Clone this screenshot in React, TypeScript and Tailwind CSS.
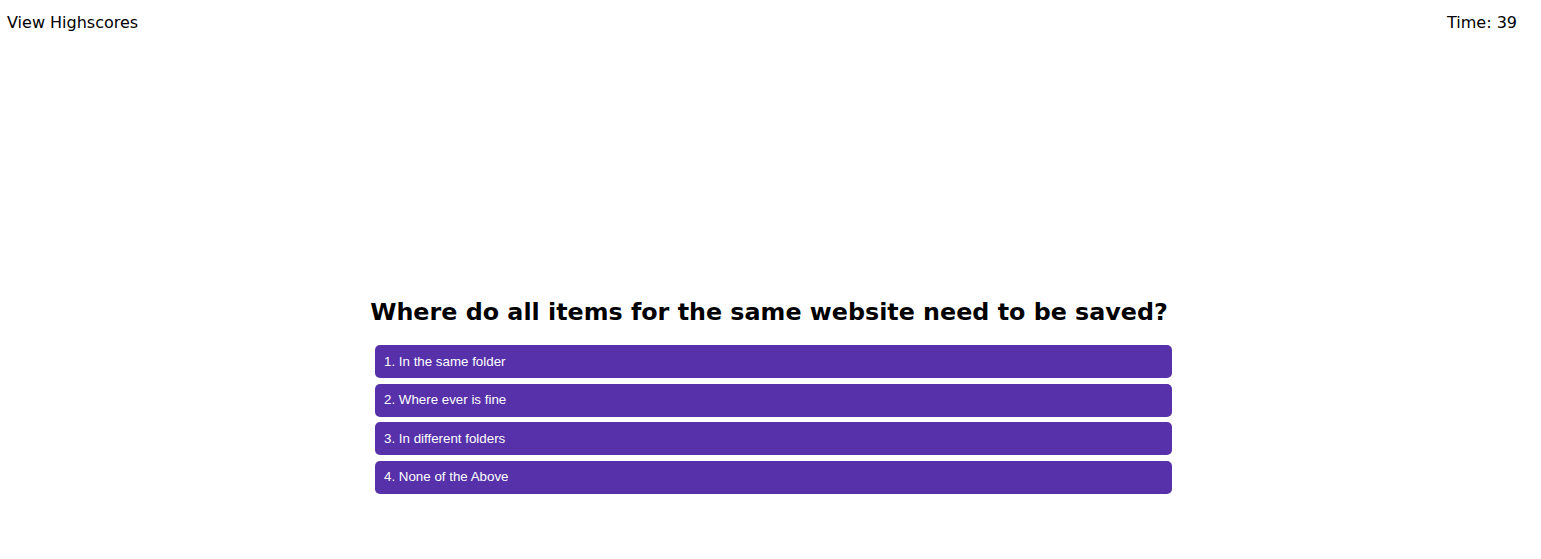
import React from "react";

export default function App() {
  const answers = [
    "1. In the same folder",
    "2. Where ever is fine",
    "3. In different folders",
    "4. None of the Above",
  ];
  return (
    <div className="w-[1541px] h-[559px] bg-white text-black" style={{ fontFamily: '"DejaVu Sans", Verdana, sans-serif' }}>
      <div className="flex justify-between pl-[7px] pr-[24px] pt-[13px] text-[16px] leading-[20px]">
        <span>View Highscores</span>
        <span>Time: 39</span>
      </div>
      <div className="flex flex-col items-center pt-[264px]">
        <h1 className="text-[23.8px] leading-[30px] font-bold mr-[3px]">Where do all items for the same website need to be saved?</h1>
        <div className="flex flex-col gap-[5.5px] mt-[18px] w-[797px] ml-[6px]">
          {answers.map((a) => (
            <button
              key={a}
              className="h-[33px] w-full rounded-[5px] bg-[#5631a9] text-white text-left pl-[9px] text-[13.33px]"
              style={{ fontFamily: '"Liberation Sans", Arial, sans-serif' }}
            >
              {a}
            </button>
          ))}
        </div>
      </div>
    </div>
  );
}
